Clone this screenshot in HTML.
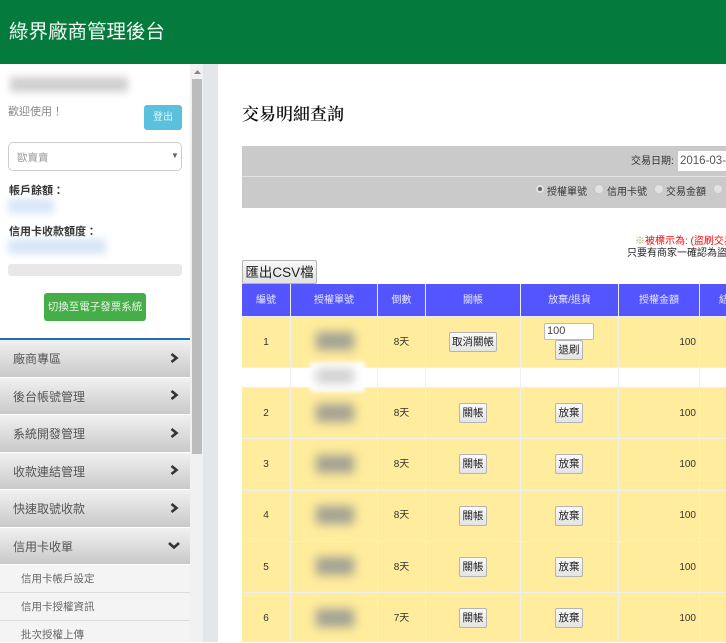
<!DOCTYPE html>
<html lang="zh-Hant">
<head>
<meta charset="utf-8">
<title>綠界廠商管理後台</title>
<style>
html,body{margin:0;padding:0;background:#fff}
body{position:relative;width:726px;height:642px;overflow:hidden;font-family:"Liberation Sans","Noto Sans CJK TC",sans-serif;font-size:10px;color:#333}
div,span,b{position:absolute;display:block;white-space:nowrap}
.top{left:0;top:0;width:726px;height:64px;background:#047a3c}
.brand{left:9px;top:19px;font-size:19.5px;line-height:26px;color:#f2faf4;font-weight:400}
.side{left:0;top:64px;width:190px;height:578px;background:#fff}
.blur{filter:blur(4px)}
.nav{left:0;width:190px;background:linear-gradient(#f1f1f1,#c9c9c9)}
.nav span{left:13px;top:10px;font-size:12px;line-height:18px;color:#555}
.sub{left:0;width:190px;height:27px;background:#f4f4f4;border-bottom:1px solid #ddd}
.sub span{left:21px;top:7px;font-size:10.5px;line-height:15px;color:#666}
.c{text-align:center}
.hline{left:242px;width:484px;height:1px;background:#edf0f3}
.vline{top:284px;width:1px;height:358px;background:#edf0f3}
.th{top:285px;height:32px;line-height:32px;color:#e8e8ff;font-size:10px;text-align:center;z-index:3}
.td{text-align:center;line-height:16px;font-size:10px;color:#333;z-index:3}
.btn{box-sizing:border-box;height:20px;line-height:18px;font-size:10.5px;color:#222;text-align:center;background:linear-gradient(#fafafa,#e4e4e4);border:1px solid #b4b4b4;border-radius:2px;z-index:3}
.smudge{left:316px;width:38px;height:18px;background:#a3a294;filter:blur(5px);z-index:3}
.radio{box-sizing:border-box;top:184px;width:10px;height:10px;border-radius:50%;background:#e2e2e2;border:1px solid #c8c8c8}
.rl{top:185px;font-size:10px;line-height:16px;color:#333}
</style>
</head>
<body>
<div class="top"></div>
<div class="brand">綠界廠商管理後台</div>

<div class="side"></div>
<div class="blur" style="left:10px;top:77px;width:118px;height:15px;background:#cfcfcf"></div>
<div style="left:8px;top:105px;font-size:11px;line-height:15px;color:#888">歡迎使用！</div>
<div class="c" style="left:144px;top:105px;width:38px;height:25px;line-height:25px;background:#5bc0de;border-radius:3px;color:#e9f7fb;font-size:10px">登出</div>
<div style="box-sizing:border-box;left:8px;top:142px;width:174px;height:29px;border:1px solid #ccc;border-radius:5px;background:#fff"></div>
<div style="left:17px;top:151px;font-size:10.5px;line-height:15px;color:#999">歐賣賣</div>
<div style="left:171px;top:150px;font-size:8px;line-height:11px;color:#666">▼</div>
<div style="left:9px;top:184px;font-size:11px;line-height:15px;font-weight:bold;color:#333">帳戶餘額：</div>
<div class="blur" style="left:8px;top:199px;width:46px;height:14px;background:#d6e6f7"></div>
<div style="left:9px;top:225px;font-size:11px;line-height:15px;font-weight:bold;color:#333">信用卡收款額度：</div>
<div class="blur" style="left:8px;top:239px;width:98px;height:15px;background:#d6e6f7"></div>
<div style="left:8px;top:264px;width:174px;height:12px;background:#e8e8e8;border-radius:3px"></div>
<div class="c" style="left:44px;top:293px;width:102px;height:28px;line-height:28px;background:#45ae49;border-radius:3px;color:#e8f6e8;font-size:10.5px">切換至電子發票系統</div>

<div style="left:0;top:338px;width:190px;height:2px;background:#1f6fb5"></div>
<div class="nav" style="top:340px;height:37px"><span>廠商專區</span></div>
<div class="nav" style="top:378px;height:36px"><span>後台帳號管理</span></div>
<div class="nav" style="top:415px;height:37px"><span>系統開發管理</span></div>
<div class="nav" style="top:453px;height:36px"><span>收款連結管理</span></div>
<div class="nav" style="top:490px;height:37px"><span>快速取號收款</span></div>
<div class="nav" style="top:528px;height:36px"><span>信用卡收單</span></div>
<div class="sub" style="top:565px"><span>信用卡帳戶設定</span></div>
<div class="sub" style="top:593px"><span>信用卡授權資訊</span></div>
<div class="sub" style="top:621px;height:21px;border:0"><span>批次授權上傳</span></div>

<svg style="position:absolute;left:169px;top:351px" width="12" height="170" viewBox="0 0 12 170" fill="none" stroke="#333" stroke-width="2.6">
<path d="M2.500 3l5 4-5 4"/><path d="M2.500 40l5 4-5 4"/><path d="M2.500 78l5 4-5 4"/><path d="M2.500 115l5 4-5 4"/><path d="M2.500 153l5 4-5 4"/>
</svg>
<svg style="position:absolute;left:168px;top:541px" width="12" height="10" viewBox="0 0 12 10" fill="none" stroke="#333" stroke-width="2.6"><path d="M1 2l5 4.500 5-4.500"/></svg>

<div style="left:190px;top:64px;width:13px;height:578px;background:#f1f1f1"></div>
<div style="left:192px;top:79px;width:10px;height:375px;background:#bcbcbc"></div>
<svg style="position:absolute;left:193px;top:69px" width="9" height="6" viewBox="0 0 9 6"><path d="M4.500 1L8 5H1z" fill="#888"/></svg>
<div style="left:203px;top:64px;width:15px;height:578px;background:#e4e7ea"></div>

<div style="left:242px;top:104px;font-family:'Liberation Serif','Noto Serif CJK SC',serif;font-size:17px;line-height:22px;color:#111;font-weight:600">交易明細查詢</div>

<div style="left:242px;top:146px;width:484px;height:62px;background:#cacaca"></div>
<div style="left:242px;top:176px;width:484px;height:1px;background:#e2e2e2"></div>
<div style="left:631px;top:154px;font-size:10px;line-height:16px;color:#333">交易日期:</div>
<div style="left:678px;top:151px;width:48px;height:20px;line-height:20px;background:#fff;font-size:11.5px;color:#555;padding-left:2px;overflow:hidden">2016-03-</div>
<div class="radio" style="left:535px"></div><div style="left:538px;top:187px;width:4px;height:4px;border-radius:50%;background:#666"></div>
<div class="rl" style="left:547px">授權單號</div>
<div class="radio" style="left:594px"></div>
<div class="rl" style="left:607px">信用卡號</div>
<div class="radio" style="left:654px"></div>
<div class="rl" style="left:666px">交易金額</div>
<div class="radio" style="left:713px"></div>

<div style="left:635px;top:235px;font-size:10px;line-height:14px;color:#f00"><b style="position:static;display:inline;color:#a9a95a;font-weight:normal">※</b>被標示為: (盜刷交易</div>
<div style="left:627px;top:247px;font-size:10px;line-height:14px;color:#222">只要有商家一確認為盜刷</div>

<div class="c" style="box-sizing:border-box;left:242px;top:260px;width:75px;height:24px;line-height:23px;font-size:13.5px;color:#222;background:linear-gradient(#f8f8f8,#e2e2e2);border:1px solid #b4b4b4;border-radius:2px">匯出CSV檔</div>

<div style="left:242px;top:284px;width:484px;height:32px;background:#5555ff"></div>
<div style="left:242px;top:316px;width:484px;height:326px;background:#ffec9c"></div>
<div style="left:242px;top:367px;width:484px;height:20px;background:#fff"></div>
<div class="vline" style="left:290px"></div>
<div class="vline" style="left:377px"></div>
<div class="vline" style="left:425px"></div>
<div class="vline" style="left:520px"></div>
<div class="vline" style="left:618px"></div>
<div class="vline" style="left:699px"></div>
<div class="hline" style="top:316px"></div>
<div class="hline" style="top:367px"></div>
<div class="hline" style="top:387px"></div>
<div class="hline" style="top:438px"></div>
<div class="hline" style="top:490px"></div>
<div class="hline" style="top:541px"></div>
<div class="hline" style="top:592px"></div>

<div class="th" style="left:242px;width:48px">編號</div>
<div class="th" style="left:291px;width:86px">授權單號</div>
<div class="th" style="left:378px;width:47px">倒數</div>
<div class="th" style="left:426px;width:94px">關帳</div>
<div class="th" style="left:521px;width:97px">放棄/退貨</div>
<div class="th" style="left:619px;width:80px">授權金額</div>
<div class="th" style="left:700px;width:26px;overflow:hidden;text-align:left;padding-left:19px;box-sizing:border-box">結</div>

<div style="left:310px;top:362px;width:55px;height:30px;background:#fff;filter:blur(2px);z-index:2"></div>
<div class="smudge" style="top:332px"></div>
<div class="smudge" style="top:369px;background:#cfcfcf;height:14px"></div>
<div class="smudge" style="top:404px"></div>
<div class="smudge" style="top:455px"></div>
<div class="smudge" style="top:506px"></div>
<div class="smudge" style="top:557px"></div>
<div class="smudge" style="top:609px"></div>

<div class="td" style="left:242px;width:48px;top:335px">1</div>
<div class="td" style="left:378px;width:47px;top:335px">8天</div>
<div class="btn" style="left:449px;top:332px;width:48px">取消關帳</div>
<div style="box-sizing:border-box;left:544px;top:323px;width:50px;height:17px;line-height:15px;background:#fff;border:1px solid #bbb;border-radius:2px;font-size:11px;color:#444;padding-left:2px;z-index:3">100</div>
<div class="btn" style="left:555px;top:340px;width:28px">退刷</div>
<div class="td" style="left:619px;width:77px;top:335px;text-align:right">100</div>

<div class="td" style="left:242px;width:48px;top:406px">2</div>
<div class="td" style="left:378px;width:47px;top:406px">8天</div>
<div class="btn" style="left:459px;top:403px;width:28px">關帳</div>
<div class="btn" style="left:555px;top:403px;width:28px">放棄</div>
<div class="td" style="left:619px;width:77px;top:406px;text-align:right">100</div>

<div class="td" style="left:242px;width:48px;top:457px">3</div>
<div class="td" style="left:378px;width:47px;top:457px">8天</div>
<div class="btn" style="left:459px;top:454px;width:28px">關帳</div>
<div class="btn" style="left:555px;top:454px;width:28px">放棄</div>
<div class="td" style="left:619px;width:77px;top:457px;text-align:right">100</div>

<div class="td" style="left:242px;width:48px;top:508px">4</div>
<div class="td" style="left:378px;width:47px;top:508px">8天</div>
<div class="btn" style="left:459px;top:506px;width:28px">關帳</div>
<div class="btn" style="left:555px;top:506px;width:28px">放棄</div>
<div class="td" style="left:619px;width:77px;top:508px;text-align:right">100</div>

<div class="td" style="left:242px;width:48px;top:560px">5</div>
<div class="td" style="left:378px;width:47px;top:560px">8天</div>
<div class="btn" style="left:459px;top:557px;width:28px">關帳</div>
<div class="btn" style="left:555px;top:557px;width:28px">放棄</div>
<div class="td" style="left:619px;width:77px;top:560px;text-align:right">100</div>

<div class="td" style="left:242px;width:48px;top:611px">6</div>
<div class="td" style="left:378px;width:47px;top:611px">7天</div>
<div class="btn" style="left:459px;top:608px;width:28px">關帳</div>
<div class="btn" style="left:555px;top:608px;width:28px">放棄</div>
<div class="td" style="left:619px;width:77px;top:611px;text-align:right">100</div>
</body>
</html>
